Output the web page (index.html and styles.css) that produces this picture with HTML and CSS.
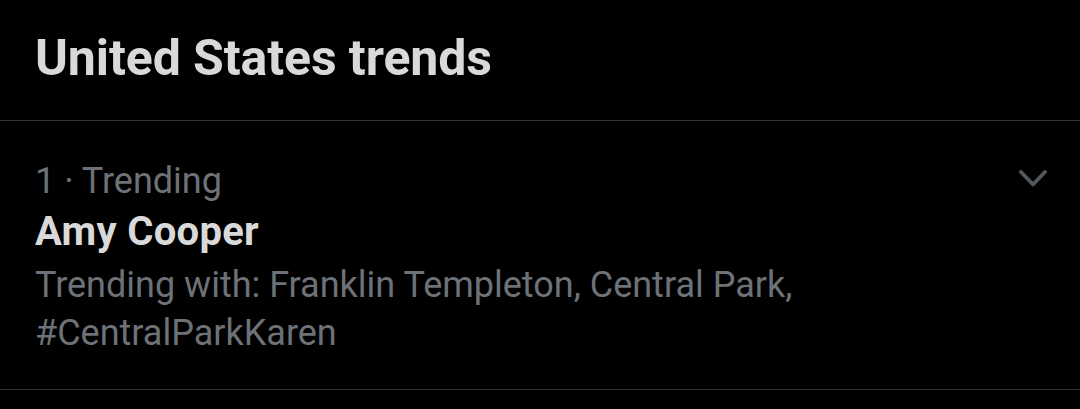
FILE: index.html
```html
<!DOCTYPE html>
<html lang="en">
<head>
    <meta charset="UTF-8">
    <title>United States trends</title>
    <link rel="stylesheet" href="styles.css">
</head>
<body>
    <div class="panel">
        <div class="panel-header">
            <h2>United States trends</h2>
        </div>

        <div class="trend">
            <div class="trend-body">
                <div class="trend-meta">1 · Trending</div>
                <div class="trend-name">Amy Cooper</div>
                <div class="trend-with">Trending with: Franklin Templeton, Central Park, #CentralParkKaren</div>
            </div>
            <svg class="caret" viewBox="0 0 28 17" width="28" height="17">
                <path d="M2 2 L14 14.5 L26 2" fill="none" stroke="#53585d" stroke-width="3.8" stroke-linecap="round" stroke-linejoin="round"/>
            </svg>
        </div>
    </div>
</body>
</html>
```

FILE: styles.css
```css
* {
    margin: 0;
    padding: 0;
    box-sizing: border-box;
    font-family: Roboto, 'Noto Sans', Arial, sans-serif;
}

body {
    background: #000;
    width: 1080px;
    height: 409px;
    overflow: hidden;
}

.panel-header {
    height: 121px;
    padding: 29px 35px 0;
    border-bottom: 1px solid #2f3336;
}

.panel-header h2 {
    color: #d9d9d9;
    font-size: 50px;
    font-weight: 700;
    letter-spacing: -0.1px;
    line-height: 58px;
}

.trend {
    display: flex;
    justify-content: space-between;
    padding: 35px 33px 0 35px;
    height: 269px;
    border-bottom: 1px solid #2f3336;
}

.trend-body {
    width: 800px;
}

.trend-meta,
.trend-with {
    color: #6c7277;
    font-size: 36px;
}

.trend-meta {
    line-height: 50px;
}

.trend-name {
    color: #d9d9d9;
    font-size: 40px;
    font-weight: 700;
    letter-spacing: 0.3px;
    line-height: 52px;
}

.trend-with {
    margin-top: 3px;
    line-height: 48px;
}

.caret {
    margin-top: 14px;
}
```
